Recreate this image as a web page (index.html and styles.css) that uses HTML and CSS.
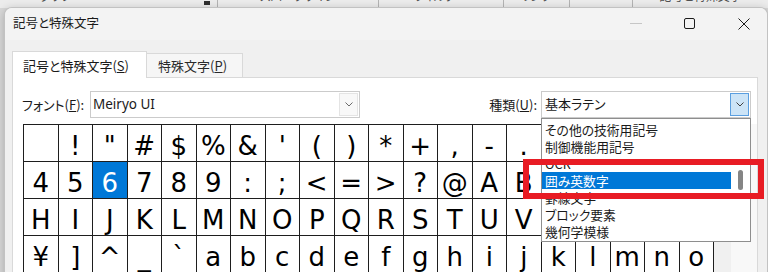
FILE: index.html
```html
<!DOCTYPE html>
<html lang="ja">
<head>
<meta charset="utf-8">
<title>記号と特殊文字</title>
<link rel="stylesheet" href="styles.css">
</head>
<body>
<div class="ribbon">
  <div class="rg rg1"><span class="rl">グラフ</span><span class="rbox"></span></div>
  <div class="rg rg2"><span class="rl">スパークライン</span></div>
  <div class="rg rg3"><span class="rl">フィルター</span></div>
  <div class="rg rg4"><span class="rl">リンク</span></div>
  <div class="rg rg5"></div>
  <div class="rg rg6"><span class="rl">記号と特殊文字</span></div>
</div>

<div class="dialog">
  <div class="titlebar">
    <span class="title">記号と特殊文字</span>
    <div class="controls">
      <svg class="ctl ctl-min" width="12" height="12" viewBox="0 0 12 12"><path d="M0 5.5H12" stroke="#c6c6c6" stroke-width="1"/></svg>
      <svg class="ctl ctl-max" width="11" height="12" viewBox="0 0 11 12"><rect x="0.5" y="0.5" width="10" height="10" rx="1.5" fill="none" stroke="#1b1b1b" stroke-width="1"/></svg>
      <svg class="ctl ctl-close" width="12" height="12" viewBox="0 0 12 12"><path d="M0.5 0.5L11.5 11.5M11.5 0.5L0.5 11.5" fill="none" stroke="#1b1b1b" stroke-width="1"/></svg>
    </div>
  </div>
  <div class="content">
    <div class="tabs">
      <div class="tab tab-active">記号と特殊文字(<u>S</u>)</div>
      <div class="tab tab-second">特殊文字(<u>P</u>)</div>
    </div>
    <div class="panel">
      <div class="fields">
        <span class="lbl lbl-font">フォント(<u>F</u>):</span>
        <div class="combo combo-font">
          <span class="val">Meiryo UI</span>
          <span class="dd"><svg width="8" height="5" viewBox="0 0 8 5"><path d="M0.5 0.5L4 4L7.5 0.5" fill="none" stroke="#6a6a6a" stroke-width="1"/></svg></span>
        </div>
        <span class="lbl lbl-kind">種類(<u>U</u>):</span>
        <div class="combo combo-kind">
          <span class="val">基本ラテン</span>
          <span class="dd dd-active"><svg width="8" height="5" viewBox="0 0 8 5"><path d="M0.5 0.5L4 4L7.5 0.5" fill="none" stroke="#404040" stroke-width="1"/></svg></span>
          <div class="list">
            <div class="item">その他の技術用記号</div>
            <div class="item">制御機能用記号</div>
            <div class="item">OCR</div>
            <div class="item item-sel">囲み英数字</div>
            <div class="item">罫線文字</div>
            <div class="item">ブロック要素</div>
            <div class="item">幾何学模様</div>
            <span class="thumb"></span>
          </div>
        </div>
      </div>
      <div class="gridrow">
        <div class="chars">
          <span>&nbsp;</span><span>!</span><span>&quot;</span><span>#</span><span>$</span><span>%</span><span>&amp;</span><span>'</span><span>(</span><span>)</span><span>*</span><span>+</span><span>,</span><span>-</span><span>.</span><span>/</span><span>0</span><span>1</span><span>2</span><span>3</span>
          <span>4</span><span>5</span><span class="cell-sel">6</span><span>7</span><span>8</span><span>9</span><span>:</span><span>;</span><span>&lt;</span><span>=</span><span>&gt;</span><span>?</span><span>@</span><span>A</span><span>B</span><span>C</span><span>D</span><span>E</span><span>F</span><span>G</span>
          <span>H</span><span>I</span><span>J</span><span>K</span><span>L</span><span>M</span><span>N</span><span>O</span><span>P</span><span>Q</span><span>R</span><span>S</span><span>T</span><span>U</span><span>V</span><span>W</span><span>X</span><span>Y</span><span>Z</span><span>[</span>
          <span>¥</span><span>]</span><span>^</span><span>_</span><span>`</span><span>a</span><span>b</span><span>c</span><span>d</span><span>e</span><span>f</span><span>g</span><span>h</span><span>i</span><span>j</span><span>k</span><span>l</span><span>m</span><span>n</span><span>o</span>
        </div>
        <div class="vscroll"></div>
        <div class="gfill"></div>
      </div>
    </div>
  </div>
</div>

<div class="highlight"></div>
</body>
</html>
```

FILE: styles.css
```css
html, body {
  margin: 0;
  padding: 0;
}

body {
  width: 768px;
  height: 272px;
  overflow: hidden;
  position: relative;
  background: #d8d8d8;
  font-family: "Noto Sans", "Noto Sans CJK JP", sans-serif;
  font-feature-settings: "palt";
  color: #1a1a1a;
}

/* background ribbon of the spreadsheet */
.ribbon {
  display: flex;
  height: 8px;
  background: #ececec;
  overflow: hidden;
}

.rg {
  box-sizing: border-box;
  border-right: 1px solid #b4b4b4;
  display: flex;
  justify-content: center;
  align-items: flex-start;
}

.rg1 { width: 218px; justify-content: flex-start; padding-left: 40px; }
.rg2 { width: 161px; }
.rg3 { width: 125px; }
.rg4 { width: 66px; }
.rg5 { width: 63px; }
.rg6 { flex: 1; border-right: none; }

.rl {
  font-size: 12px;
  line-height: 12px;
  margin-top: -9px;
  color: #505050;
  white-space: nowrap;
}

.rbox {
  width: 6px;
  height: 4px;
  margin: 1px 7px 0 auto;
  background: #303030;
}

/* dialog window */
.dialog {
  position: absolute;
  left: 4px;
  top: 7px;
  width: 764px;
  height: 280px;
  box-sizing: border-box;
  border: 1px solid #c2c2c2;
  border-bottom: none;
  border-radius: 8px 8px 0 0;
  background: #f0f0f0;
  box-shadow: 0 2px 10px rgba(0, 0, 0, 0.22);
  overflow: hidden;
}

.titlebar {
  height: 32px;
  display: flex;
  align-items: center;
  background: #f3f3f3;
  padding: 0 17px 0 8px;
}

.title {
  font-family: "Noto Sans CJK JP", sans-serif;
  font-size: 12.5px;
  margin-top: -3px;
  color: #1a1a1a;
}

.controls {
  margin-left: auto;
  display: flex;
  align-items: center;
}

.ctl { display: block; }
.ctl-min { margin-right: 42px; }
.ctl-max { margin-right: 43px; }

.content {
  padding: 11px 9px 0 7px;
}

.tabs {
  display: flex;
  align-items: flex-end;
  height: 26px;
}

.tab {
  box-sizing: border-box;
  border: 1px solid #d9d9d9;
  border-bottom: none;
  font-family: "Noto Sans CJK JP", sans-serif;
  font-size: 13px;
  display: flex;
  align-items: center;
  white-space: nowrap;
}

.tab-active {
  width: 135px;
  height: 27px;
  margin-bottom: -1px;
  padding-left: 10px;
  background: #ffffff;
  position: relative;
  z-index: 1;
}

.tab-second {
  width: 96px;
  height: 24px;
  padding-left: 11px;
  border-left: none;
  background: #f6f6f6;
  color: #2a2a2a;
}

.panel {
  box-sizing: border-box;
  height: 220px;
  border: 1px solid #d9d9d9;
  background: #ffffff;
  padding-top: 13px;
}

.fields {
  display: flex;
  align-items: center;
  height: 27px;
  padding: 0 6px 0 9px;
}

.lbl {
  font-family: "Noto Sans CJK JP", sans-serif;
  font-size: 13px;
  white-space: nowrap;
}

.lbl-font {
  width: 68px;
}

.lbl-kind {
  margin-left: auto;
  margin-right: 4px;
}

.combo {
  position: relative;
  box-sizing: border-box;
  height: 27px;
  border: 1px solid #cbcbcb;
  background: #ffffff;
  display: flex;
  align-items: center;
}

.combo-font {
  width: 270px;
  padding-left: 2px;
}

.combo-kind {
  width: 210px;
  padding-left: 3px;
  z-index: 5;
}

.val {
  flex: 1;
  font-size: 13.5px;
  margin-top: -2px;
  white-space: nowrap;
}

.combo-kind .val {
  font-family: "Noto Sans CJK JP", sans-serif;
  font-size: 13px;
}

.dd {
  box-sizing: border-box;
  width: 19px;
  height: 23px;
  margin-right: 1px;
  border: 1px solid #e4e4e4;
  background: #f8f8f8;
  display: flex;
  align-items: center;
  justify-content: center;
}

.dd svg { display: block; }

.dd-active {
  background: #cce4f7;
  border-color: #5b9fe0;
}

.list {
  position: absolute;
  top: calc(100% + 1px);
  left: -1px;
  width: 210px;
  height: 124px;
  box-sizing: border-box;
  border: 1px solid #8e8e8e;
  background: #ffffff;
  padding-top: 2px;
  overflow: hidden;
}

.item {
  box-sizing: border-box;
  width: 189px;
  height: 17px;
  line-height: 17px;
  padding-left: 3px;
  font-family: "Noto Sans CJK JP", sans-serif;
  font-size: 12.8px;
  white-space: nowrap;
  color: #1a1a1a;
}

.item-sel {
  background: #0078d7;
  color: #ffffff;
}

.thumb {
  position: absolute;
  left: 196px;
  top: 51px;
  width: 5px;
  height: 20px;
  border-radius: 3px;
  background: #858585;
}

.gridrow {
  display: flex;
  margin-top: 6px;
  padding-left: 10px;
  height: 160px;
}

.chars {
  display: grid;
  grid-template-columns: repeat(20, 34.5px);
  grid-auto-rows: 37px;
  border-left: 1px solid #1e1e1e;
  border-top: 1px solid #1e1e1e;
  align-self: flex-start;
}

.chars span {
  box-sizing: border-box;
  border-right: 1px solid #1e1e1e;
  border-bottom: 1px solid #1e1e1e;
  text-align: center;
  font-family: "DejaVu Sans", sans-serif;
  font-feature-settings: normal;
  font-size: 26px;
  line-height: 42px;
  overflow: hidden;
  color: #000000;
  white-space: nowrap;
}

.chars span.cell-sel {
  background: #0078d7;
  color: #ffffff;
}

.vscroll {
  width: 17px;
  background: #f0f0f0;
}

.gfill {
  flex: 1;
  background: #f8f8f8;
}

/* red annotation frame */
.highlight {
  position: absolute;
  left: 523px;
  top: 159px;
  width: 241px;
  height: 40px;
  box-sizing: border-box;
  border: 6px solid #e81c24;
  z-index: 10;
}
```
